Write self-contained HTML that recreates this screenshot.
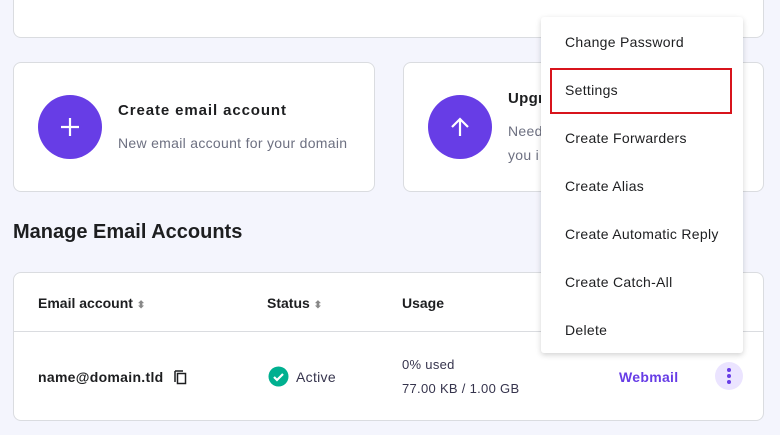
<!DOCTYPE html>
<html><head><style>
*{box-sizing:border-box;margin:0;padding:0}
body{width:780px;height:435px;overflow:hidden;background:#f4f5fd;font-family:"Liberation Sans",sans-serif;color:#1d1e20;position:relative;letter-spacing:.3px}
.card{position:absolute;background:#fff;border:1px solid #dadce0;border-radius:8px}
.circ{position:absolute;width:64px;height:64px;border-radius:50%;background:#673de6;color:#fff;display:flex;align-items:center;justify-content:center}
.t{position:absolute;white-space:nowrap}
.menu{position:absolute;left:541px;top:17px;width:202px;height:336px;background:#fff;box-shadow:0 2px 6px rgba(0,0,0,.18);border-radius:3px}
.menu div{position:absolute;left:24px;font-size:14px;color:#1d1e20}
</style></head><body>
<div class="card" style="left:13px;top:-10px;width:751px;height:48px"></div>
<div class="card" style="left:13px;top:62px;width:362px;height:130px"></div>
<div class="card" style="left:403px;top:62px;width:361px;height:130px"></div>
<div class="circ" style="left:38px;top:95px"><svg width="22" height="22"><path d="M11 2v18M2 11h18" stroke="#fff" stroke-width="2.2"/></svg></div>
<div class="t" style="left:118px;top:102px;font-size:15px;font-weight:bold;letter-spacing:.9px">Create email account</div>
<div class="t" style="left:118px;top:135px;font-size:14px;color:#6d7081">New email account for your domain</div>
<div class="circ" style="left:428px;top:95px"><svg width="24" height="24"><path d="M12 21V4M4 12l8-8 8 8" stroke="#fff" stroke-width="2.2" fill="none"/></svg></div>
<div class="t" style="left:508px;top:90px;font-size:15px;font-weight:bold">Upgr</div>
<div class="t" style="left:508px;top:123px;font-size:14px;color:#6d7081">Need</div>
<div class="t" style="left:508px;top:147px;font-size:14px;color:#6d7081">you i</div>
<div class="t" style="left:13px;top:221px;font-size:20px;font-weight:bold;letter-spacing:0">Manage Email Accounts</div>
<div class="card" style="left:13px;top:272px;width:751px;height:149px"></div>
<div style="position:absolute;left:14px;top:331px;width:749px;height:1px;background:#dadce0"></div>
<div class="t" style="left:38px;top:295px;font-size:14px;font-weight:bold;letter-spacing:0">Email account <span style="color:#888;font-size:10px">⬍</span></div>
<div class="t" style="left:267px;top:295px;font-size:14px;font-weight:bold;letter-spacing:0">Status <span style="color:#888;font-size:10px">⬍</span></div>
<div class="t" style="left:402px;top:295px;font-size:14px;font-weight:bold;letter-spacing:0">Usage</div>
<div class="t" style="left:38px;top:369px;font-size:14px;font-weight:bold">name@domain.tld</div>
<svg style="position:absolute;left:172px;top:369px" width="16" height="16"><path d="M3 2v11M3 2h8" stroke="#1d1e20" stroke-width="1.5" fill="none"/><rect x="5.5" y="4.5" width="8" height="10" stroke="#1d1e20" stroke-width="1.5" fill="none"/></svg>
<svg style="position:absolute;left:268px;top:366px" width="21" height="21"><circle cx="10.5" cy="10.5" r="10" fill="#00b090"/><path d="M6 11l3 3 6-6" stroke="#fff" stroke-width="2.2" fill="none"/></svg>
<div class="t" style="left:296px;top:369px;font-size:14px;color:#36344d">Active</div>
<div class="t" style="left:402px;top:357px;font-size:13px;color:#36344d">0% used</div>
<div class="t" style="left:402px;top:381px;font-size:13px;color:#36344d">77.00 KB / 1.00 GB</div>
<div class="t" style="left:619px;top:369px;font-size:14px;font-weight:bold;color:#673de6">Webmail</div>
<div style="position:absolute;left:715px;top:362px;width:28px;height:28px;border-radius:50%;background:#ebe4ff"><svg width="28" height="28"><g fill="#673de6"><circle cx="14" cy="8" r="2"/><circle cx="14" cy="14" r="2"/><circle cx="14" cy="20" r="2"/></g></svg></div>
<div class="menu">
<div style="top:17px">Change Password</div>
<div style="top:65px">Settings</div>
<div style="top:113px">Create Forwarders</div>
<div style="top:161px">Create Alias</div>
<div style="top:209px">Create Automatic Reply</div>
<div style="top:257px">Create Catch-All</div>
<div style="top:305px">Delete</div>
</div>
<div style="position:absolute;left:550px;top:68px;width:182px;height:46px;border:2px solid #d8141c"></div>
</body></html>
